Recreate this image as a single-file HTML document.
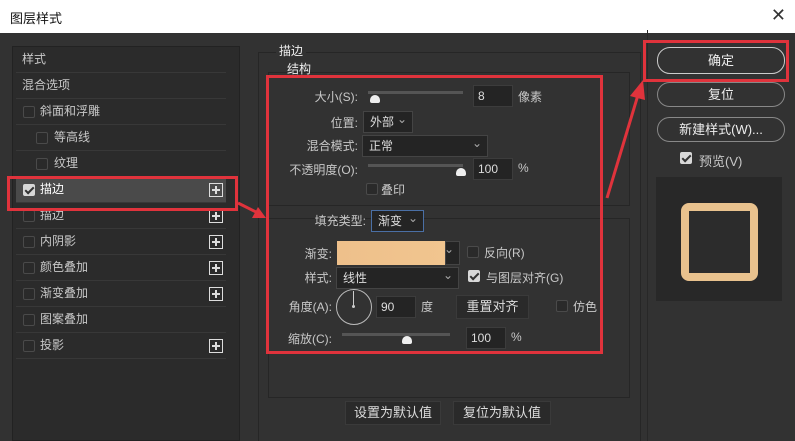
<!DOCTYPE html>
<html><head><meta charset="utf-8"><style>
*{box-sizing:border-box;margin:0;padding:0}
body{width:795px;height:441px;overflow:hidden;background:#323232;font-family:"Liberation Sans","Noto Sans CJK SC",sans-serif;font-size:12px;color:#c8c8c8;position:relative}
.a{position:absolute}
.title{left:0;top:0;width:795px;height:33px;background:#fff;color:#111;font-size:13px;padding:8px 0 0 10px}
.x{right:9px;top:5px;font-size:18px;color:#333;font-weight:normal}
.lp{left:12px;top:46px;width:228px;height:395px;background:#2b2b2b;border:1px solid #222}
.row{position:absolute;left:3px;width:210px;height:26px;border-bottom:1px solid #383838;line-height:25px;padding-left:6px}
.cb{position:absolute;width:12px;height:12px;border:1px solid #4a4a4a;border-radius:2px;background:#2a2a2a}
.cbc{background:#d8d8d8;border-color:#d8d8d8}
.cbc::after{content:"";position:absolute;left:3px;top:0px;width:3px;height:7px;border:solid #333;border-width:0 2px 2px 0;transform:rotate(45deg)}
.plus{position:absolute;left:193px;top:6px;width:14px;height:14px;border:1px solid #ddd}
.plus::before{content:"";position:absolute;left:2px;top:5px;width:8px;height:2px;background:#ddd}
.plus::after{content:"";position:absolute;left:5px;top:2px;width:2px;height:8px;background:#ddd}
.red{border:3px solid #e0333c}
.inp{background:#242424;border:1px solid #3c3c3c;color:#ddd;padding-left:4px;line-height:20px;height:22px}
.sel{background:#242424;border:1px solid #444;color:#ddd;padding-left:6px;line-height:20px;height:22px}
.sel::after{content:"⌄";position:absolute;right:5px;top:-3px;color:#aaa}
.track{height:3px;background:#555}
.thumb{width:10px;height:8px;background:#eee;border-radius:5px 5px 2px 2px}
.btn{background:#2a2a2a;border:1px solid #3a3a3a;text-align:center;line-height:22px;color:#ddd;font-size:13px}
.rb{left:657px;width:128px;border:1px solid #888;border-radius:13px;text-align:center;color:#eee;font-size:13px}
.lbl{text-align:right}
</style></head><body>
<div class="a title">图层样式</div>
<div class="a x">✕</div>
<div class="a lp">
 <div class="row" style="top:0">样式</div>
 <div class="row" style="top:26px">混合选项</div>
 <div class="row" style="top:52px"><span class="cb" style="left:7px;top:7px"></span><span style="padding-left:18px">斜面和浮雕</span></div>
 <div class="row" style="top:78px"><span class="cb" style="left:20px;top:7px"></span><span style="padding-left:32px">等高线</span></div>
 <div class="row" style="top:104px"><span class="cb" style="left:20px;top:7px"></span><span style="padding-left:32px">纹理</span></div>
 <div class="row" style="top:130px;background:#4a4a4a"><span class="cb cbc" style="left:7px;top:7px"></span><span style="padding-left:18px;color:#fff">描边</span><span class="plus"></span></div>
 <div class="row" style="top:156px"><span class="cb" style="left:7px;top:7px"></span><span style="padding-left:18px">描边</span><span class="plus"></span></div>
 <div class="row" style="top:182px"><span class="cb" style="left:7px;top:7px"></span><span style="padding-left:18px">内阴影</span><span class="plus"></span></div>
 <div class="row" style="top:208px"><span class="cb" style="left:7px;top:7px"></span><span style="padding-left:18px">颜色叠加</span><span class="plus"></span></div>
 <div class="row" style="top:234px"><span class="cb" style="left:7px;top:7px"></span><span style="padding-left:18px">渐变叠加</span><span class="plus"></span></div>
 <div class="row" style="top:260px"><span class="cb" style="left:7px;top:7px"></span><span style="padding-left:18px">图案叠加</span></div>
 <div class="row" style="top:286px"><span class="cb" style="left:7px;top:7px"></span><span style="padding-left:18px">投影</span><span class="plus"></span></div>
</div>
<div class="a red" style="left:7px;top:176px;width:231px;height:35px"></div>

<div class="a" style="left:258px;top:52px;width:383px;height:389px;border-left:1px solid #262626;border-top:1px solid #262626;border-right:1px solid #262626"></div>
<div class="a" style="left:276px;top:42px;background:#323232;padding:0 3px;color:#eee">描边</div>
<div class="a" style="left:268px;top:72px;width:362px;height:134px;border:1px solid #262626"></div>
<div class="a" style="left:287px;top:60px;color:#eee">结构</div>
<div class="a" style="left:268px;top:218px;width:362px;height:180px;border:1px solid #262626"></div>

<div class="a lbl" style="left:290px;top:88px;width:68px">大小(S):</div>
<div class="a track" style="left:368px;top:91px;width:95px"></div>
<div class="a thumb" style="left:370px;top:95px"></div>
<div class="a inp" style="left:473px;top:85px;width:40px">8</div>
<div class="a" style="left:518px;top:88px">像素</div>

<div class="a lbl" style="left:290px;top:114px;width:68px">位置:</div>
<div class="a sel" style="left:363px;top:111px;width:50px">外部</div>
<div class="a lbl" style="left:280px;top:137px;width:78px">混合模式:</div>
<div class="a sel" style="left:362px;top:135px;width:126px">正常</div>
<div class="a lbl" style="left:280px;top:161px;width:78px">不透明度(O):</div>
<div class="a track" style="left:368px;top:164px;width:95px"></div>
<div class="a thumb" style="left:456px;top:168px"></div>
<div class="a inp" style="left:473px;top:158px;width:40px">100</div>
<div class="a" style="left:518px;top:161px">%</div>
<div class="a cb" style="left:366px;top:183px"></div>
<div class="a" style="left:381px;top:181px">叠印</div>

<div class="a lbl" style="left:280px;top:212px;width:86px">填充类型:</div>
<div class="a sel" style="left:371px;top:210px;width:53px;border-color:#4a6fa5">渐变</div>

<div class="a lbl" style="left:280px;top:245px;width:52px">渐变:</div>
<div class="a" style="left:337px;top:241px;width:108px;height:24px;background:linear-gradient(90deg,#eec08b,#f1c58f)"></div>
<div class="a sel" style="left:445px;top:241px;width:15px;height:24px;padding:0"></div>
<div class="a cb" style="left:467px;top:246px"></div>
<div class="a" style="left:484px;top:244px">反向(R)</div>
<div class="a lbl" style="left:280px;top:269px;width:52px">样式:</div>
<div class="a sel" style="left:336px;top:267px;width:123px">线性</div>
<div class="a cb cbc" style="left:468px;top:270px"></div>
<div class="a" style="left:486px;top:269px">与图层对齐(G)</div>

<div class="a lbl" style="left:280px;top:298px;width:52px">角度(A):</div>
<div class="a" style="left:336px;top:289px;width:36px;height:36px;border:1px solid #bbb;border-radius:50%"></div>
<div class="a" style="left:353px;top:291px;width:1px;height:15px;background:#ccc"></div>
<div class="a" style="left:352px;top:305px;width:3px;height:3px;background:#ccc;border-radius:50%"></div>
<div class="a inp" style="left:376px;top:296px;width:40px">90</div>
<div class="a" style="left:421px;top:298px">度</div>
<div class="a btn" style="left:456px;top:295px;width:73px;height:24px">重置对齐</div>
<div class="a cb" style="left:556px;top:300px"></div>
<div class="a" style="left:573px;top:298px">仿色</div>

<div class="a lbl" style="left:280px;top:330px;width:52px">缩放(C):</div>
<div class="a track" style="left:342px;top:333px;width:108px"></div>
<div class="a thumb" style="left:402px;top:336px"></div>
<div class="a inp" style="left:466px;top:327px;width:40px">100</div>
<div class="a" style="left:511px;top:330px">%</div>

<div class="a red" style="left:266px;top:75px;width:337px;height:279px"></div>

<div class="a btn" style="left:345px;top:401px;width:96px;height:24px">设置为默认值</div>
<div class="a btn" style="left:453px;top:401px;width:98px;height:24px">复位为默认值</div>

<div class="a" style="left:647px;top:30px;width:1px;height:411px;background:#282828"></div>
<div class="a rb" style="top:47px;height:27px;line-height:25px;border-color:#ccc">确定</div>
<div class="a rb" style="top:82px;height:25px;line-height:23px">复位</div>
<div class="a rb" style="top:117px;height:25px;line-height:23px">新建样式(W)...</div>
<div class="a cb cbc" style="left:680px;top:152px"></div>
<div class="a" style="left:699px;top:151px;font-size:13px">预览(V)</div>
<div class="a" style="left:656px;top:177px;width:126px;height:124px;background:#282828"></div>
<div class="a" style="left:681px;top:203px;width:77px;height:78px;border:8px solid #e9c28e;border-radius:8px;background:#2c2c2c"></div>
<div class="a red" style="left:643px;top:40px;width:146px;height:42px"></div>

<svg class="a" style="left:0;top:0" width="795" height="441">
<g stroke="#e0333c" stroke-width="3" fill="#e0333c">
<line x1="238" y1="203" x2="258" y2="213"/>
<polygon points="266,218 252,218 258,207" stroke="none"/>
<line x1="607" y1="198" x2="638" y2="95"/>
<polygon points="643,80 645,100 630,96" stroke="none"/>
</g></svg>
</body></html>
